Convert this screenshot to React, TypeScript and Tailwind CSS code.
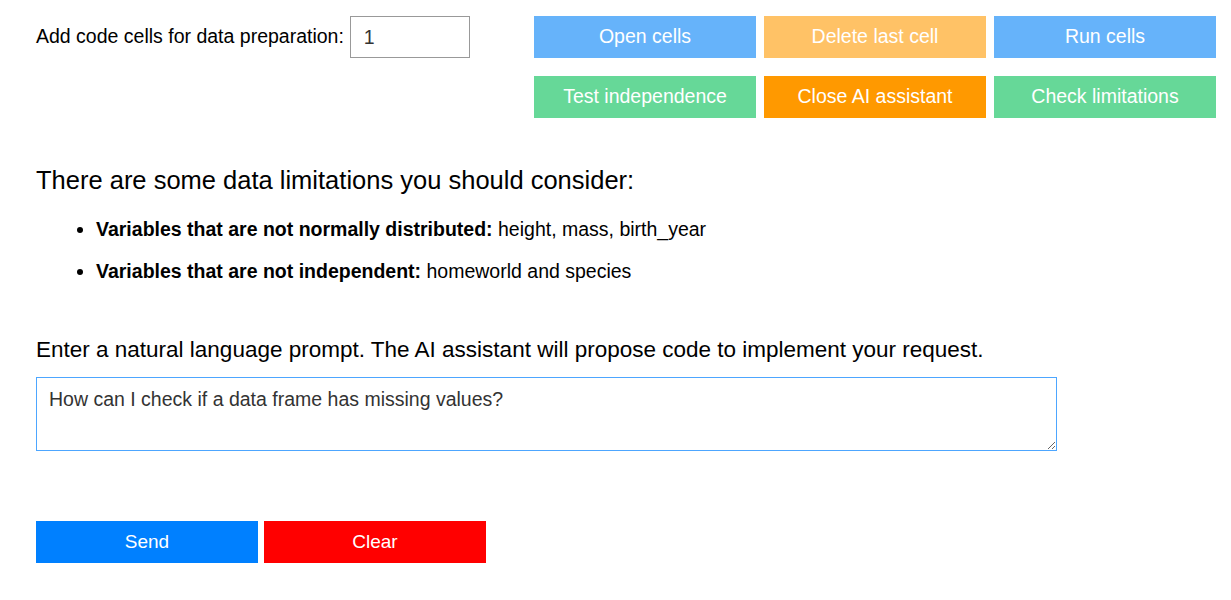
export default function App() {
  const font = { fontFamily: '"Liberation Sans", Arial, sans-serif' };
  return (
    <div className="min-h-[600px] bg-white text-black" style={font}>
      <div className="flex pl-[36px] pt-4">
        <div className="flex w-[498px] items-start">
          <label className="flex h-[42px] items-center text-[19.5px]">Add code cells for data preparation:</label>
          <input
            defaultValue="1"
            className="ml-[6px] h-[42px] w-[120px] border border-[#999] px-[13px] text-[19.5px] text-[#333] outline-none"
          />
        </div>
        <div className="grid grid-cols-[222px_222px_222px] gap-x-2 gap-y-[18px] text-[19.5px] text-white">
          <button className="h-[42px] bg-[#66b3fa]">Open cells</button>
          <button className="h-[42px] bg-[#ffc266]">Delete last cell</button>
          <button className="h-[42px] bg-[#66b3fa]">Run cells</button>
          <button className="h-[42px] bg-[#66d898]">Test independence</button>
          <button className="h-[42px] bg-[#ff9900]">Close AI assistant</button>
          <button className="h-[42px] bg-[#66d898]">Check limitations</button>
        </div>
      </div>

      <div className="px-[36px]">
        <h2 className="mt-[46px] text-[25.5px] leading-[32px]">There are some data limitations you should consider:</h2>
        <ul className="mt-[20px] list-disc pl-[60px] text-[19.5px]">
          <li className="leading-[26px]">
            <b>Variables that are not normally distributed:</b> height, mass, birth_year
          </li>
          <li className="mt-[16px] leading-[26px]">
            <b>Variables that are not independent:</b> homeworld and species
          </li>
        </ul>

        <p className="mt-[52px] text-[22.5px] leading-[28px]">
          Enter a natural language prompt. The AI assistant will propose code to implement your request.
        </p>
        <textarea
          defaultValue="How can I check if a data frame has missing values?"
          className="mt-[13px] block h-[74px] w-[1021px] border border-[#4da6ff] px-3 py-[7px] text-[19.5px] text-[#333] outline-none"
        />

        <div className="mt-[70px] flex gap-[6px] text-[19px] text-white">
          <button className="h-[42px] w-[222px] bg-[#0080ff]">Send</button>
          <button className="h-[42px] w-[222px] bg-[#ff0000]">Clear</button>
        </div>
      </div>
    </div>
  );
}
